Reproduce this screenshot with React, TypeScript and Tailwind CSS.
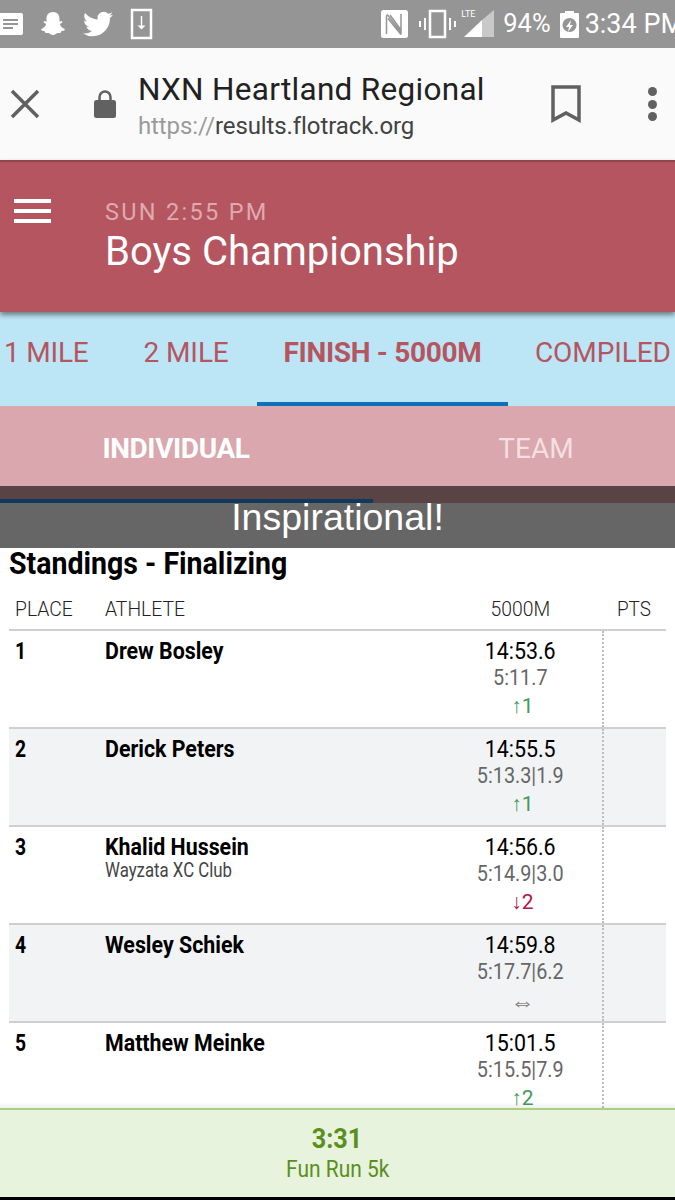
import React from "react";

const StatusIcons = () => (
  <div className="flex h-[48px] shrink-0 items-center justify-between overflow-hidden bg-[#959595] text-white">
    <div className="flex items-center">
      <svg width="24" height="24" viewBox="0 0 24 24">
        <path fill="#fff" fillRule="evenodd" d="M-4 1h25a2 2 0 0 1 2 2v18a2 2 0 0 1-2 2H-4zM3 7v2h15V7zM3 11v2h15v-2zM3 15v2h10v-2z" />
      </svg>
      <svg width="28" height="28" viewBox="0 0 28 28" className="ml-[15px]">
        <path fill="#fff" d="M14 2c4 0 6.500 2.800 6.500 6.500v3.200l2.300-.7.7 1.300-2.600 1.600c.6 2.400 2.400 4 5 5l-.6 1.600-3 .7-.8 1.900-3.100-.2c-1.400.5-2.500 2-4.400 2s-3-1.500-4.400-2l-3.100.2-.8-1.900-3-.7-.6-1.600c2.600-1 4.400-2.600 5-5L4.500 12.300l.7-1.300 2.300.7V8.500C7.500 4.800 10 2 14 2z" />
      </svg>
      <svg width="34" height="30" viewBox="0 0 24 24" className="ml-[14px]">
        <path fill="#fff" d="M23.950 4.570a10 10 0 0 1-2.820.770 4.960 4.960 0 0 0 2.160-2.720c-.950.550-2 .960-3.130 1.200a4.920 4.920 0 0 0-8.380 4.480C7.690 8.100 4.070 6.130 1.640 3.160a4.820 4.820 0 0 0-.660 2.470c0 1.710.870 3.210 2.190 4.100a4.900 4.900 0 0 1-2.230-.620v.060a4.920 4.920 0 0 0 3.950 4.830 5 5 0 0 1-2.210.080 4.940 4.940 0 0 0 4.600 3.420A9.870 9.870 0 0 1 0 19.540a14 14 0 0 0 7.560 2.210c9.050 0 14-7.500 14-13.980 0-.210 0-.420-.020-.630a9.940 9.940 0 0 0 2.410-2.570z" />
      </svg>
      <svg width="24" height="32" viewBox="0 0 24 32" className="ml-[15px]">
        <path fill="none" stroke="#fff" strokeWidth="2.500" d="M2 2h19v28H2z" />
        <path fill="none" stroke="#fff" strokeWidth="1.500" d="M11.500 8v12" />
        <path fill="#fff" d="M7.500 17.500h8l-4 4z" />
      </svg>
    </div>
    <div className="flex items-center">
      <svg width="27" height="28" viewBox="0 0 27 28">
        <rect width="27" height="28" rx="2.500" fill="#fff" />
        <path fill="none" stroke="#959595" strokeWidth="1.500" d="M5.500 24V6c0-1 1-1.200 1.600-.4L20 22.500V4M9 5l11 15M7 8.500l13 16" />
      </svg>
      <svg width="38" height="30" viewBox="0 0 38 30" className="ml-[11px]">
        <path fill="none" stroke="#fff" strokeWidth="2.500" d="M11 2h15v26H11z" />
        <path fill="#fff" d="M5 9h2v12H5zM0 12h2v6H0zM30 9h2v12h-2zM35 12h2v6h-2z" />
      </svg>
      <div className="relative ml-[7px] h-[30px] w-[30px]">
        <svg width="30" height="30" viewBox="0 0 30 30">
          <path fill="#c9c9c9" d="M30 1v27H18V11z" />
          <path fill="#fff" d="M18 11v17H0z" />
        </svg>
        <span className="absolute left-[-3px] top-[0px] text-[9px] leading-[11px] [font-family:Roboto,sans-serif]">LTE</span>
      </div>
      <span className="ml-[9px] text-[25.500px] leading-none [font-family:Roboto,sans-serif]">94%</span>
      <svg width="19" height="27" viewBox="0 0 19 27" className="ml-[9px]">
        <path fill="#fff" fillRule="evenodd" d="M5 0h9v2h4a1 1 0 0 1 1 1v23a1 1 0 0 1-1 1H1a1 1 0 0 1-1-1V3a1 1 0 0 1 1-1h4zM9.500 7a7 7 0 1 0 .01 0zM11 9l-5 7h3l-1 5 5-7h-3z" />
      </svg>
      <span className="ml-[6px] mr-[-9px] whitespace-nowrap text-[27px] leading-none [font-family:Roboto,sans-serif]">3:34 PM</span>
    </div>
  </div>
);

const BrowserBar = () => (
  <div className="flex h-[112px] shrink-0 items-center bg-[#fafafa] [font-family:Roboto,sans-serif]">
    <svg width="30" height="30" viewBox="0 0 30 30" className="ml-[10px] shrink-0">
      <path stroke="#616161" strokeWidth="3.500" d="M2 2l26 26M28 2L2 28" />
    </svg>
    <svg width="22" height="30" viewBox="0 0 22 30" className="ml-[54px] shrink-0">
      <path fill="none" stroke="#616161" strokeWidth="2.500" d="M5.500 11V8a5.500 5.500 0 0 1 11 0v3" />
      <rect x="0" y="11" width="22" height="18" rx="2.500" fill="#616161" />
    </svg>
    <div className="ml-[22px] flex-1 pt-[8px]">
      <div className="text-[31.500px] leading-[36px] tracking-[0.3px] text-[#212121]">NXN Heartland Regional</div>
      <div className="text-[24px] leading-[36px] tracking-[-0.1px] text-[#424242]">
        <span className="text-[#9a9a9a]">https://</span>results.flotrack.org
      </div>
    </div>
    <svg width="30" height="38" viewBox="0 0 30 38" className="mr-[67px] shrink-0">
      <path fill="none" stroke="#616161" strokeWidth="3.500" d="M2 2h26v33l-13-7-13 7z" />
    </svg>
    <div className="mr-[18px] flex shrink-0 flex-col gap-[3.500px]">
      <span className="h-[9px] w-[9px] rounded-full bg-[#616161]" />
      <span className="h-[9px] w-[9px] rounded-full bg-[#616161]" />
      <span className="h-[9px] w-[9px] rounded-full bg-[#616161]" />
    </div>
  </div>
);

const Header = () => (
  <div className="relative z-10 flex h-[152px] shrink-0 items-start border-t-[2px] border-[#8f454e] bg-[#b55560] shadow-[0_3px_5px_rgba(0,0,0,0.45)] [font-family:Roboto,sans-serif]">
    <div className="ml-[14px] mt-[37px] flex w-[37px] flex-col gap-[6px]">
      <span className="h-[4px] bg-white" />
      <span className="h-[4px] bg-white" />
      <span className="h-[4px] bg-white" />
    </div>
    <div className="ml-[54px] mt-[37px]">
      <div className="text-[23.500px] leading-[27px] tracking-[2.300px] text-[#dea9af]">SUN 2:55 PM</div>
      <div className="mt-[4px] whitespace-nowrap text-[40px] leading-[44px] text-white">Boys Championship</div>
    </div>
  </div>
);

const Tabs = () => (
  <div className="relative flex h-[94px] shrink-0 overflow-hidden bg-[#bce6f6] text-[28px] text-[#b55560] [font-family:Roboto,sans-serif]">
    <div className="flex w-[257px] shrink-0 pt-[24px] leading-[34px]">
      <span className="ml-[4px] tracking-[-0.2px]">1 MILE</span>
      <span className="ml-[55px] tracking-[-0.1px]">2 MILE</span>
    </div>
    <div className="w-[251px] shrink-0 border-b-[4px] border-[#0f6fb8] pt-[24px] text-center font-bold leading-[34px] tracking-[-0.3px]">
      FINISH - 5000M
    </div>
    <div className="ml-[27px] whitespace-nowrap pt-[24px] leading-[34px] tracking-[-0.1px]">COMPILED</div>
  </div>
);

const SubTabs = () => (
  <div className="flex h-[80px] shrink-0 items-center bg-[#d9a7ad] pt-[6px] text-[28px] [font-family:Roboto,sans-serif]">
    <div className="w-[352px] shrink-0 text-center font-bold tracking-[-0.4px] text-white">INDIVIDUAL</div>
    <div className="ml-[52px] w-[264px] shrink-0 text-center text-[#f5dfe1]">TEAM</div>
  </div>
);

const Banner = () => (
  <div className="shrink-0">
    <div className="flex h-[17px] flex-col justify-end bg-[#5a4345]">
      <div className="h-[4px] w-[373px] bg-[#0f3a5e]" />
    </div>
    <div className="h-[45px] bg-[#666666] text-center text-[37.500px] leading-[28px] text-white [font-family:'Liberation_Sans',sans-serif]">
      Inspirational!
    </div>
  </div>
);

type Row = { place: number; name: string; team?: string; time: string; split: string; delta: string; color: string };

const rows: Row[] = [
  { place: 1, name: "Drew Bosley", time: "14:53.6", split: "5:11.7", delta: "↑1", color: "text-[#3f9a55] text-[21px] leading-[32px]" },
  { place: 2, name: "Derick Peters", time: "14:55.5", split: "5:13.3|1.9", delta: "↑1", color: "text-[#3f9a55] text-[21px] leading-[32px]" },
  { place: 3, name: "Khalid Hussein", team: "Wayzata XC Club", time: "14:56.6", split: "5:14.9|3.0", delta: "↓2", color: "text-[#b3154a] text-[21px] leading-[32px]" },
  { place: 4, name: "Wesley Schiek", time: "14:59.8", split: "5:17.7|6.2", delta: "⇔", color: "text-[#777777] text-[24px] leading-[36px]" },
  { place: 5, name: "Matthew Meinke", time: "15:01.5", split: "5:15.5|7.9", delta: "↑2", color: "text-[#3f9a55] text-[21px] leading-[32px]" },
];

const Condensed = ({ children, className }: { children: React.ReactNode; className: string }) => (
  <span className={"inline-block origin-left whitespace-nowrap " + className}>{children}</span>
);

const CondensedCenter = ({ children, className }: { children: React.ReactNode; className: string }) => (
  <span className={"inline-block whitespace-nowrap " + className}>{children}</span>
);

const Standings = () => (
  <div className="relative min-h-0 flex-1 overflow-hidden bg-white [font-family:Roboto,sans-serif]">
    <div className="h-[34px] w-[340px] pl-[9px] text-[31px] font-bold leading-[32px] text-black">
      <Condensed className="scale-x-[0.92]">Standings - Finalizing</Condensed>
    </div>
    <div className="mx-[9px] flex h-[49px] items-center border-b-[2px] border-[#cfcfcf] pt-[9px] text-[21px] font-light text-[#222222]">
      <div className="w-[90px] pl-[6px]"><Condensed className="scale-x-[0.92]">PLACE</Condensed></div>
      <div className="w-[332px] pl-[6px]"><Condensed className="scale-x-[0.92]">ATHLETE</Condensed></div>
      <div className="w-[171px] pl-[7px] text-center"><CondensedCenter className="scale-x-[0.92]">5000M</CondensedCenter></div>
      <div className="flex-1 text-center"><CondensedCenter className="scale-x-[0.9]">PTS</CondensedCenter></div>
    </div>
    {rows.map((r) => (
      <div
        key={r.place}
        className={
          "mx-[9px] flex h-[98px] border-b-[2px] border-[#cfcfcf] " + (r.place % 2 === 0 ? "bg-[#f2f3f5]" : "bg-white")
        }
      >
        <div className="w-[90px] pl-[6px] pt-[8px] text-[23px] font-bold leading-[26px] text-black">
          <Condensed className="scale-x-[0.84]">{r.place}</Condensed>
        </div>
        <div className="w-[332px] pl-[6px] pt-[7px]">
          <div className="text-[24px] font-bold leading-[26px] text-black">
            <Condensed className="scale-x-[0.89]">{r.name}</Condensed>
          </div>
          {r.team ? (
            <div className="text-[20px] leading-[20px] text-[#444444]">
              <Condensed className="scale-x-[0.84]">{r.team}</Condensed>
            </div>
          ) : null}
        </div>
        <div className="w-[171px] pl-[7px] pt-[8px] text-center">
          <div className="text-[23px] leading-[26px] text-black"><CondensedCenter className="scale-x-[0.93]">{r.time}</CondensedCenter></div>
          <div className="text-[22px] leading-[25px] text-[#666666]"><CondensedCenter className="scale-x-[0.9]">{r.split}</CondensedCenter></div>
          <div className={"pl-[5px] " + r.color}>{r.delta}</div>
        </div>
        <div className="flex-1 border-l-[2px] border-dotted border-[#bdbdbd]" />
      </div>
    ))}
    <div className="pointer-events-none absolute inset-x-0 bottom-0 h-[6px] bg-gradient-to-b from-transparent to-[#0000000f]" />
  </div>
);

const Footer = () => (
  <div className="flex h-[92px] shrink-0 flex-col items-center border-t-[2px] border-b-[3px] border-t-[#a9cf7f] border-b-black bg-[#e8f3dd] pt-[13px] [font-family:Roboto,sans-serif]">
    <div className="text-[28px] font-bold leading-[32px] text-[#5a8f1d]"><CondensedCenter className="scale-x-[0.9]">3:31</CondensedCenter></div>
    <div className="text-[23px] leading-[29px] text-[#5a8f1d]"><CondensedCenter className="scale-x-[0.91]">Fun Run 5k</CondensedCenter></div>
  </div>
);

export default function App() {
  return (
    <div className="flex h-[1200px] w-[675px] flex-col overflow-hidden bg-white">
      <StatusIcons />
      <BrowserBar />
      <Header />
      <Tabs />
      <SubTabs />
      <Banner />
      <Standings />
      <Footer />
    </div>
  );
}
